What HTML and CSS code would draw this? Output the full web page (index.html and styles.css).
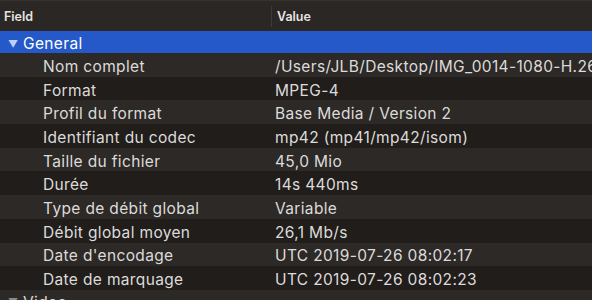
FILE: index.html
```html
<!DOCTYPE html>
<html lang="fr">
<head>
    <meta charset="UTF-8">
    <title>MediaInfo</title>
    <link rel="stylesheet" href="styles.css">
</head>
<body>
<div class="table">
    <div class="head">
        <div class="col-field">Field</div>
        <div class="col-value">Value</div>
    </div>
    <div class="group"><span class="arrow">&#9660;</span>General</div>
    <div class="row"><div class="col-field">Nom complet</div><div class="col-value">/Users/JLB/Desktop/IMG_0014-1080-H.264.mp4</div></div>
    <div class="row"><div class="col-field">Format</div><div class="col-value">MPEG-4</div></div>
    <div class="row"><div class="col-field">Profil du format</div><div class="col-value">Base Media / Version 2</div></div>
    <div class="row"><div class="col-field">Identifiant du codec</div><div class="col-value">mp42 (mp41/mp42/isom)</div></div>
    <div class="row"><div class="col-field">Taille du fichier</div><div class="col-value">45,0 Mio</div></div>
    <div class="row"><div class="col-field">Durée</div><div class="col-value">14s 440ms</div></div>
    <div class="row"><div class="col-field">Type de débit global</div><div class="col-value">Variable</div></div>
    <div class="row"><div class="col-field">Débit global moyen</div><div class="col-value">26,1 Mb/s</div></div>
    <div class="row"><div class="col-field">Date d'encodage</div><div class="col-value">UTC 2019-07-26 08:02:17</div></div>
    <div class="row"><div class="col-field">Date de marquage</div><div class="col-value">UTC 2019-07-26 08:02:23</div></div>
    <div class="group next"><span class="arrow">&#9660;</span>Video</div>
</div>
</body>
</html>
```

FILE: styles.css
```css
body {
    margin: 0;
    background-color: #211e1c;
    font-family: Inter, "Open Sans", sans-serif;
    overflow: hidden;
}

.table {
    width: 592px;
    height: 300px;
    overflow: hidden;
}

.head {
    display: flex;
    align-items: center;
    height: 30px;
    background-color: #2a2725;
    border-top: 1px solid #35322f;
    font-size: 12.5px;
    font-weight: 600;
    color: #e6e4e2;
}

.head .col-field {
    width: 267px;
    padding-left: 4px;
    border-right: 1px solid #3d3a37;
    line-height: 21px;
}

.head .col-value {
    padding-left: 5px;
}

.group {
    display: flex;
    align-items: center;
    box-sizing: border-box;
    height: 22px;
    padding-top: 3px;
    background-color: #2558c8;
    color: #ffffff;
    font-size: 15.5px;
    letter-spacing: 0.35px;
}

.arrow {
    width: 12px;
    margin-left: 8px;
    margin-right: 3px;
    font-size: 10px;
    color: #b8d2f8;
}

.group.next {
    background-color: #2c2927;
    color: #d8d6d4;
}

.group.next .arrow {
    color: #8a8784;
}

.row {
    display: flex;
    align-items: center;
    box-sizing: border-box;
    height: 23.7px;
    padding-top: 3px;
    font-size: 15.5px;
    letter-spacing: 0.35px;
    color: #dddbd9;
    white-space: nowrap;
}

.row:nth-child(odd) {
    background-color: #2c2927;
}

.row:nth-child(even) {
    background-color: #201d1b;
}

.row .col-field {
    width: 232px;
    padding-left: 43px;
    flex-shrink: 0;
}

.row .col-value {
    overflow: hidden;
}
```
